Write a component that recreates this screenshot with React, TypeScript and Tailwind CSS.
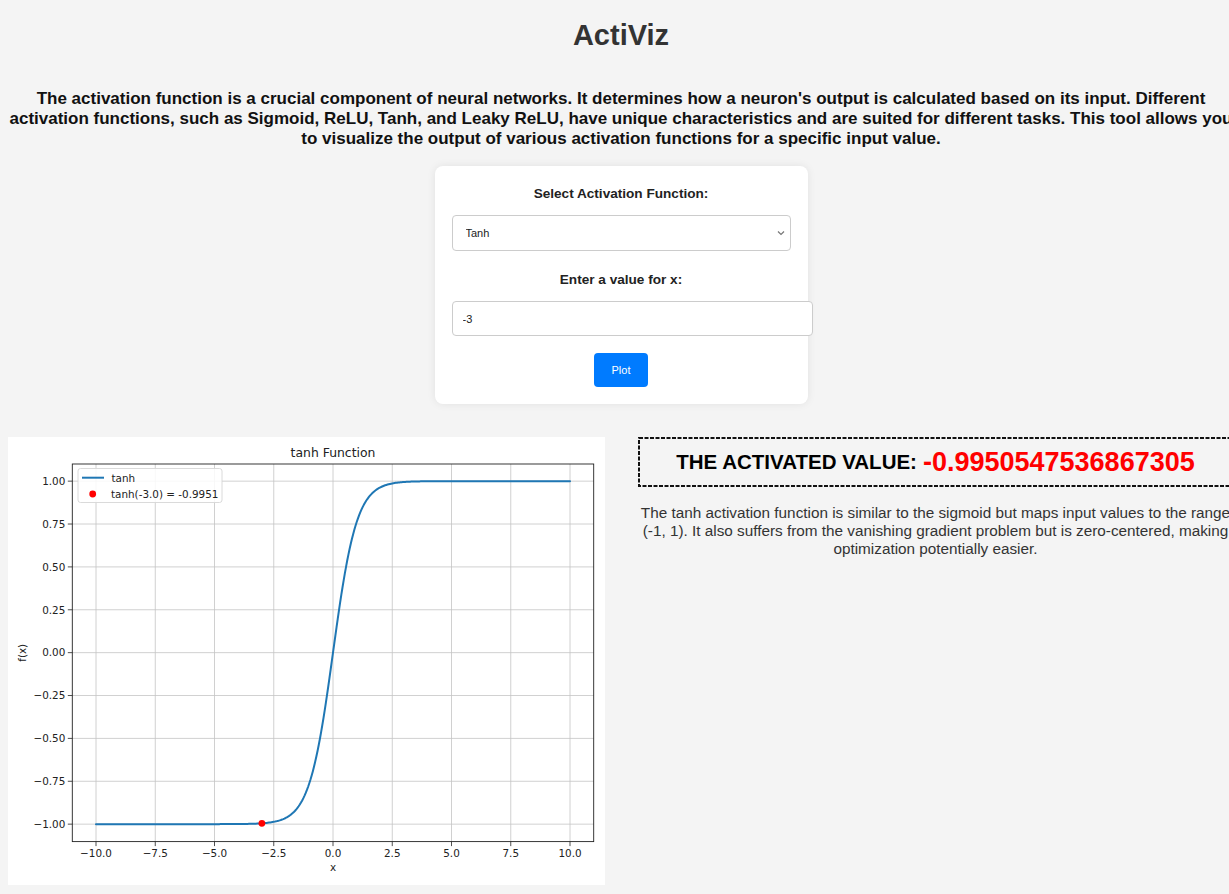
import React from "react";

const AX_L = 64.3;
const AX_R = 585.7;
const AX_T = 27;
const AX_B = 404.6;
const X = (v: number) => AX_L + (v + 11) * 23.7;
const Y = (v: number) => AX_T + (1.1 - v) * 171.5;

function Chart() {
  const pts: string[] = [];
  for (let i = 0; i <= 400; i++) {
    const x = -10 + i * 0.05;
    pts.push(`${X(x).toFixed(2)},${Y(Math.tanh(x)).toFixed(2)}`);
  }
  const xt = [-10, -7.5, -5, -2.5, 0, 2.5, 5, 7.5, 10];
  const yt = [1, 0.75, 0.5, 0.25, 0, -0.25, -0.5, -0.75, -1];
  const fmtX = (v: number) => (v < 0 ? "\u2212" : "") + Math.abs(v).toFixed(1);
  const fmtY = (v: number) => (v < 0 ? "\u2212" : "") + Math.abs(v).toFixed(2);
  const font = "'DejaVu Sans', sans-serif";
  return (
    <svg width="597" height="448" viewBox="0 0 597 448" style={{ fontFamily: font }}>
      <rect x="0" y="0" width="597" height="448" fill="#ffffff" />
      {xt.map((v) => (
        <line key={"gx" + v} x1={X(v)} x2={X(v)} y1={AX_T} y2={AX_B} stroke="#c4c4c4" strokeWidth="0.8" />
      ))}
      {yt.map((v) => (
        <line key={"gy" + v} x1={AX_L} x2={AX_R} y1={Y(v)} y2={Y(v)} stroke="#c4c4c4" strokeWidth="0.8" />
      ))}
      <polyline points={pts.join(" ")} fill="none" stroke="#1f77b4" strokeWidth="2" strokeLinejoin="round" strokeLinecap="round" />
      <circle cx={X(-3)} cy={Y(Math.tanh(-3))} r="3.4" fill="#ff0000" />
      <rect x={AX_L} y={AX_T} width={AX_R - AX_L} height={AX_B - AX_T} fill="none" stroke="#222" strokeWidth="0.9" />
      {xt.map((v) => (
        <g key={"tx" + v}>
          <line x1={X(v)} x2={X(v)} y1={AX_B} y2={AX_B + 4.5} stroke="#222" strokeWidth="0.8" />
          <text x={X(v)} y={419.7} fontSize="10.4" textAnchor="middle" fill="#222">
            {fmtX(v)}
          </text>
        </g>
      ))}
      {yt.map((v) => (
        <g key={"ty" + v}>
          <line x1={AX_L - 4.5} x2={AX_L} y1={Y(v)} y2={Y(v)} stroke="#222" strokeWidth="0.8" />
          <text x={AX_L - 7} y={Y(v) + 3.8} fontSize="10.4" textAnchor="end" fill="#222">
            {fmtY(v)}
          </text>
        </g>
      ))}
      <text x={(AX_L + AX_R) / 2} y={19.5} fontSize="12.4" textAnchor="middle" fill="#222">
        tanh Function
      </text>
      <text x={(AX_L + AX_R) / 2} y={434} fontSize="10.4" textAnchor="middle" fill="#222">
        x
      </text>
      <text x={0} y={0} fontSize="10.4" textAnchor="middle" fill="#222" transform={`translate(17.5 ${(AX_T + AX_B) / 2}) rotate(-90)`}>
        f(x)
      </text>
      <rect x="70" y="31.5" width="144" height="34" rx="2.5" fill="#ffffff" fillOpacity="0.85" stroke="#d6d6d6" strokeWidth="0.9" />
      <line x1="74" x2="96" y1="40.7" y2="40.7" stroke="#1f77b4" strokeWidth="2" />
      <text x="103.5" y="44.5" fontSize="10.4" fill="#222">
        tanh
      </text>
      <circle cx="84.7" cy="57" r="3.4" fill="#ff0000" />
      <text x="103" y="60.8" fontSize="10.4" fill="#222">
        tanh(-3.0) = -0.9951
      </text>
    </svg>
  );
}

export default function App() {
  return (
    <div
      className="w-[1242px] min-h-[894px] bg-[#f4f4f4] text-[#222]"
      style={{ fontFamily: "'Liberation Sans', Arial, Helvetica, sans-serif" }}
    >
      <h1 className="pt-[19px] text-center text-[29px] leading-[32px] font-bold text-[#333]">ActiViz</h1>
      <p className="mt-[38px] px-[8px] text-center text-[17px] leading-[20px] font-bold text-[#111]">
        The activation function is a crucial component of neural networks. It determines how a neuron's output is
        calculated based on its input. Different activation functions, such as Sigmoid, ReLU, Tanh, and Leaky ReLU, have
        unique characteristics and are suited for different tasks. This tool allows you to visualize the output of various
        activation functions for a specific input value.
      </p>

      <div className="mx-auto mt-[17px] w-[373px] h-[238px] rounded-[8px] bg-white px-[17px] pt-[20px] shadow-[0_0_8px_rgba(0,0,0,0.08)]">
        <div className="text-center text-[13.6px] leading-[16px] font-bold text-[#222]">Select Activation Function:</div>
        <div className="relative mt-[13px] w-[339px] h-[36px]">
          <select
            defaultValue="tanh"
            className="w-full h-full appearance-none rounded-[4px] border border-[#ccc] bg-white pl-[13px] text-[11px] text-[#222] outline-none"
          >
            <option value="sigmoid">Sigmoid</option>
            <option value="relu">ReLU</option>
            <option value="tanh">Tanh</option>
            <option value="leaky">Leaky ReLU</option>
          </select>
          <svg className="pointer-events-none absolute right-[6px] top-[14px]" width="8" height="8" viewBox="0 0 8 8">
            <path d="M1 2.5 L4 5.5 L7 2.5" fill="none" stroke="#777" strokeWidth="1.2" />
          </svg>
        </div>
        <div className="mt-[21px] text-center text-[13.6px] leading-[16px] font-bold text-[#222]">Enter a value for x:</div>
        <input
          defaultValue="-3"
          className="mt-[13px] block w-[361px] h-[35px] rounded-[4px] border border-[#ccc] bg-white px-[10px] text-[11px] text-[#222] outline-none"
        />
        <div className="mt-[17px] flex justify-center">
          <button className="w-[54px] h-[34px] rounded-[4px] bg-[#007bff] text-[11px] text-white">Plot</button>
        </div>
      </div>

      <div className="mt-[33px] flex items-start">
        <div className="ml-[8px] w-[597px] h-[448px] bg-white">
          <Chart />
        </div>
        <div className="ml-[33px] w-[595px]">
          <div className="relative h-[50px] flex items-center justify-center">
            <svg className="pointer-events-none absolute inset-0" width="595" height="50">
              <rect x="1" y="1" width="593" height="48" fill="none" stroke="#111" strokeWidth="2" strokeDasharray="4 1.5" />
            </svg>
            <span className="text-[20.5px] font-bold text-black">THE ACTIVATED VALUE:</span>
            <span className="ml-[6px] text-[27px] font-bold text-[#ff0000]">-0.9950547536867305</span>
          </div>
          <p className="mt-[17px] text-center text-[15.3px] leading-[18px] text-[#333]">
            The tanh activation function is similar to the sigmoid but maps input values to the range (-1, 1). It also
            suffers from the vanishing gradient problem but is zero-centered, making optimization potentially easier.
          </p>
        </div>
      </div>
    </div>
  );
}
